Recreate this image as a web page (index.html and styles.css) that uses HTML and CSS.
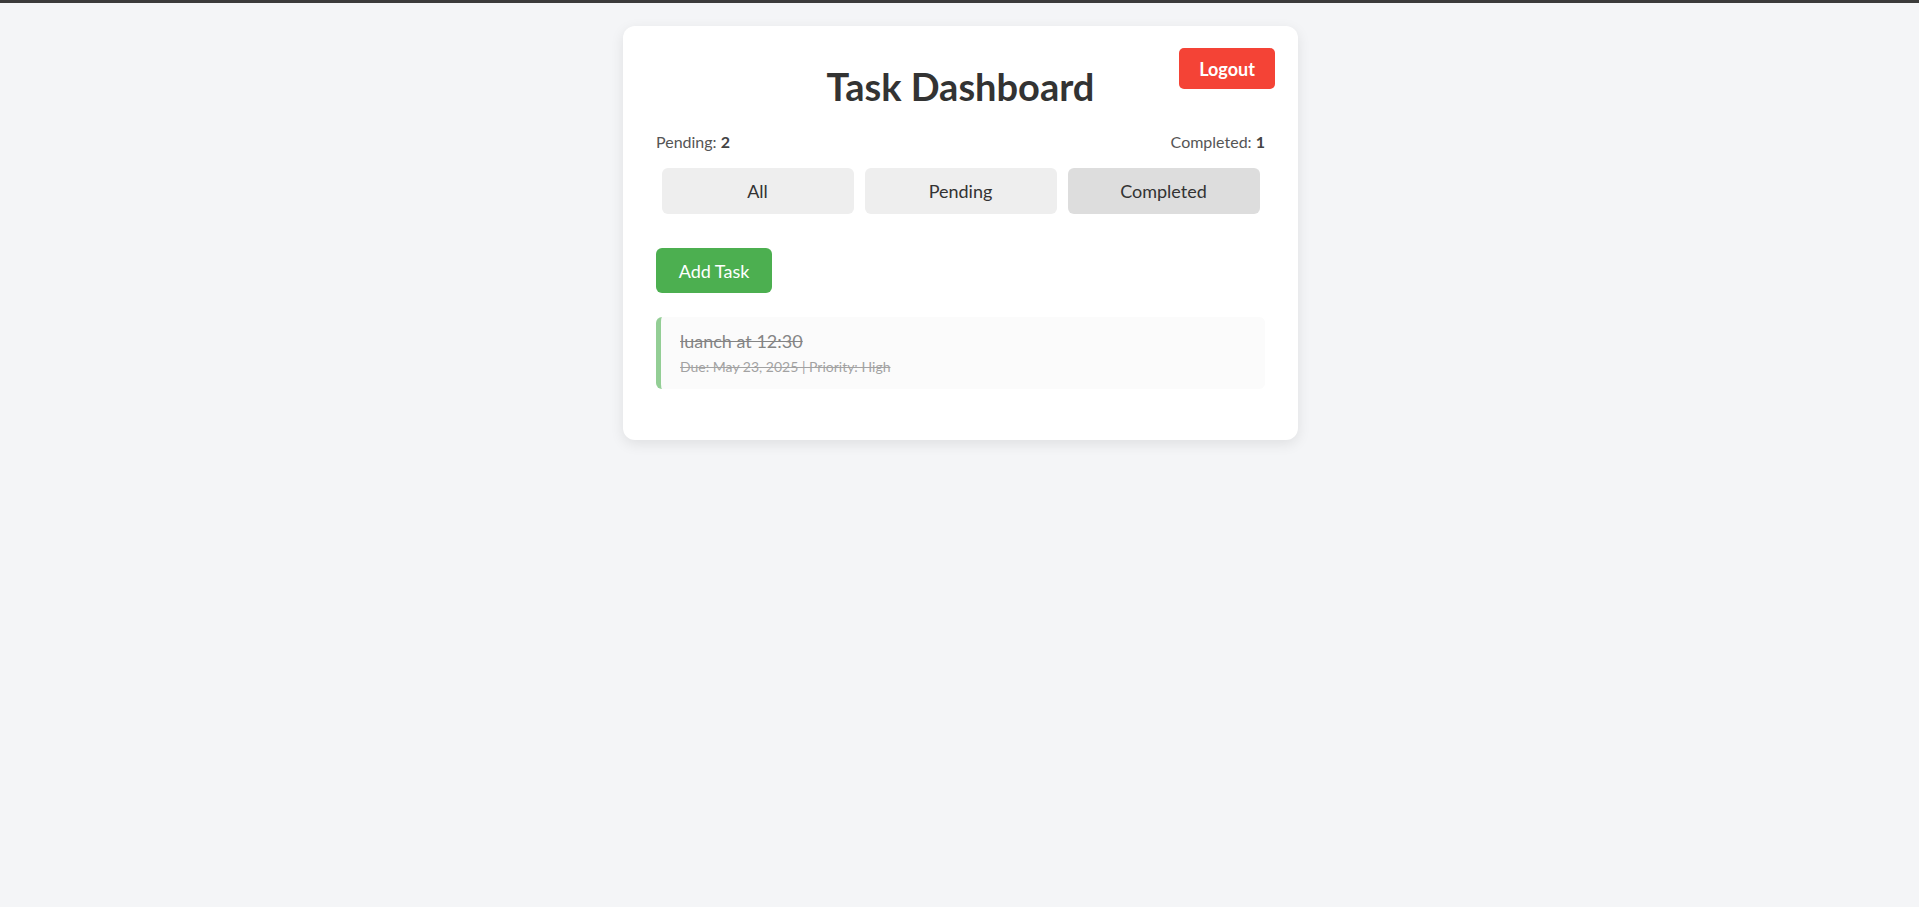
FILE: index.html
```html
<!DOCTYPE html>
<html lang="en">
<head>
<meta charset="utf-8">
<title>Task Dashboard</title>
<link rel="stylesheet" href="styles.css">
</head>
<body>
<div class="topbar"></div>
<main class="page">
  <section class="card">
    <button class="logout">Logout</button>
    <h1 class="title">Task Dashboard</h1>
    <div class="stats">
      <span>Pending: <b>2</b></span>
      <span>Completed: <b>1</b></span>
    </div>
    <div class="filters">
      <button class="filter">All</button>
      <button class="filter">Pending</button>
      <button class="filter active">Completed</button>
    </div>
    <button class="add">Add Task</button>
    <ul class="tasks">
      <li class="task done">
        <div class="task-title">luanch at 12:30</div>
        <div class="task-meta">Due: May 23, 2025 | Priority: High</div>
      </li>
    </ul>
  </section>
</main>
</body>
</html>
```

FILE: styles.css
```css
* { box-sizing: border-box; }
html, body { margin: 0; padding: 0; }
body {
  background: #f4f5f7;
  font-family: Lato, "Open Sans", "Noto Sans", sans-serif;
  color: #333;
  min-height: 907px;
}
.topbar {
  height: 3px;
  background: #3b3b3b;
}
.page {
  display: flex;
  justify-content: center;
  padding: 23px 0 0 2px;
}
.card {
  position: relative;
  width: 675px;
  background: #fff;
  border-radius: 12px;
  box-shadow: 0 4px 14px rgba(0, 0, 0, 0.09);
  padding: 33px;
}
.logout {
  position: absolute;
  top: 22px;
  right: 23px;
  width: 96px;
  height: 41px;
  border: none;
  border-radius: 5px;
  background: #f44336;
  color: #fff;
  font-family: inherit;
  font-weight: 700;
  font-size: 18px;
  cursor: pointer;
}
.title {
  margin: 0;
  text-align: center;
  font-size: 38px;
  line-height: 54px;
  font-weight: 700;
  color: #333;
}
.stats {
  margin-top: 19px;
  display: flex;
  justify-content: space-between;
  font-size: 16px;
  line-height: 20px;
  color: #555;
}
.stats b { color: #444; }
.filters {
  margin-top: 16px;
  display: flex;
  gap: 11px;
  padding: 0 5.5px;
}
.filter {
  flex: 1;
  height: 46px;
  border: none;
  border-radius: 6px;
  background: #eee;
  color: #333;
  font-family: inherit;
  font-size: 18px;
  cursor: pointer;
}
.filter.active { background: #ddd; }
.add {
  display: block;
  margin-top: 34px;
  width: 116px;
  height: 45px;
  border: none;
  border-radius: 6px;
  background: #4caf50;
  color: #fff;
  font-family: inherit;
  font-size: 18px;
  cursor: pointer;
}
.tasks {
  list-style: none;
  margin: 24px 0 0;
  padding: 0;
}
.task {
  background: #f9f9f9;
  border-left: 5px solid #4caf50;
  border-radius: 6px;
  padding: 12px 19px 12px;
  margin-bottom: 18px;
}
.task.done { opacity: 0.6; }
.task.done .task-title,
.task.done .task-meta { text-decoration: line-through; }
.task-title {
  font-size: 18px;
  line-height: 24px;
  color: #333;
}
.task-meta {
  margin-top: 4px;
  font-size: 14px;
  line-height: 20px;
  color: #666;
}
```
